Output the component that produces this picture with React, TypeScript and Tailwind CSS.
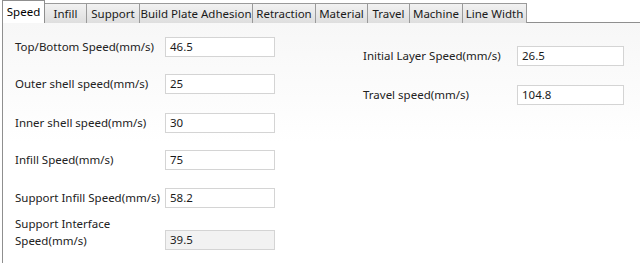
import React from "react";

const tabs = [
  { name: "Speed", w: 43 },
  { name: "Infill", w: 42 },
  { name: "Support", w: 53 },
  { name: "Build Plate Adhesion", w: 113 },
  { name: "Retraction", w: 63 },
  { name: "Material", w: 52 },
  { name: "Travel", w: 42 },
  { name: "Machine", w: 53 },
  { name: "Line Width", w: 64 },
];

const leftFields = [
  { label: "Top/Bottom Speed(mm/s)", value: "46.5", mt: "mt-[14px]" },
  { label: "Outer shell speed(mm/s)", value: "25", mt: "mt-[17px]" },
  { label: "Inner shell speed(mm/s)", value: "30", mt: "mt-[19px]" },
  { label: "Infill Speed(mm/s)", value: "75", mt: "mt-[17px]" },
  { label: "Support Infill Speed(mm/s)", value: "58.2", mt: "mt-[18px]" },
];

const rightFields = [
  { label: "Initial Layer Speed(mm/s)", value: "26.5", mt: "mt-[23px]" },
  { label: "Travel speed(mm/s)", value: "104.8", mt: "mt-[19px]" },
];

function Field({ value, disabled }: { value: string; disabled?: boolean }) {
  return (
    <div
      className={`h-[20px] border border-[#d4d4d4] flex items-center pl-[4px] text-[11.5px] text-[#1a1a1a] whitespace-nowrap ${
        disabled ? "bg-[#f2f2f2]" : "bg-white"
      }`}
    >
      {value}
    </div>
  );
}

export default function App() {
  return (
    <div
      className="w-[640px] h-[263px] bg-white overflow-hidden text-[#222]"
      style={{ fontFamily: '"Noto Sans", "Open Sans", sans-serif' }}
    >
      {/* tab strip */}
      <div className="flex items-end h-[23px] pl-[2px] relative z-10">
        {tabs.map((t, i) =>
          i === 0 ? (
            <div
              key={t.name}
              className="h-[23px] border border-b-0 border-[#8f8f8f] bg-white flex items-center justify-center text-[11.5px] text-black whitespace-nowrap"
              style={{ width: t.w }}
            >
              {t.name}
            </div>
          ) : (
            <div
              key={t.name}
              className="h-[20px] border border-l-0 border-b-0 border-[#9a9a9a] bg-gradient-to-b from-[#f2f2f2] to-[#dedede] flex items-center justify-center text-[11.5px] text-[#1a1a1a] whitespace-nowrap"
              style={{ width: t.w }}
            >
              {t.name}
            </div>
          )
        )}
      </div>

      {/* panel */}
      <div className="ml-[2px] -mt-px border-l border-t border-[#8f8f8f] h-[241px] flex bg-gradient-to-b from-[#f7f7f7] via-white to-white">
        <div className="w-[273px] pl-[12px]">
          {leftFields.map((f) => (
            <div key={f.label} className={`${f.mt} flex items-center`}>
              <div className="w-[150px] text-[11.5px] whitespace-nowrap">{f.label}</div>
              <div className="w-[110px]">
                <Field value={f.value} />
              </div>
            </div>
          ))}
          <div className="mt-[7px] flex items-start">
            <div className="w-[150px] text-[11.5px] leading-[17px] whitespace-nowrap">
              Support Interface
              <br />
              Speed(mm/s)
            </div>
            <div className="w-[110px] mt-[15px]">
              <Field value="39.5" disabled />
            </div>
          </div>
        </div>
        <div className="pl-[87px]">
          {rightFields.map((f) => (
            <div key={f.label} className={`${f.mt} flex items-center`}>
              <div className="w-[154px] text-[11.5px] whitespace-nowrap">{f.label}</div>
              <div className="w-[107px]">
                <Field value={f.value} />
              </div>
            </div>
          ))}
        </div>
      </div>
    </div>
  );
}
